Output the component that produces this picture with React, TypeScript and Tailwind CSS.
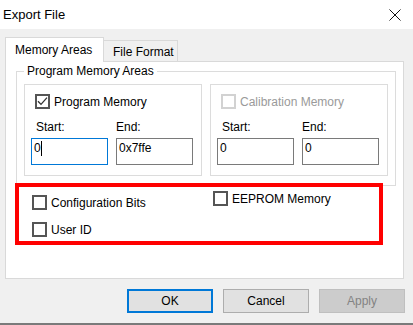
import type { ReactNode } from 'react';

function Check({ checked = false, disabled = false }: { checked?: boolean; disabled?: boolean }) {
  return (
    <span
      className={
        disabled
          ? 'flex h-[15px] w-[15px] shrink-0 items-center justify-center border-2 border-[#d2d2d2] bg-white'
          : 'flex h-[15px] w-[15px] shrink-0 items-center justify-center border-2 border-[#555555] bg-white'
      }
    >
      {checked && (
        <svg width="11" height="11" viewBox="0 0 11 11">
          <polyline points="1,5.2 4,8.4 10,1.6" fill="none" stroke="#333" strokeWidth="1.3" />
        </svg>
      )}
    </span>
  );
}

function CheckRow({ label, checked, disabled }: { label: string; checked?: boolean; disabled?: boolean }) {
  return (
    <div className="flex items-center gap-[4px]">
      <Check checked={checked} disabled={disabled} />
      <span className={disabled ? 'text-[#9a9a9a]' : ''}>{label}</span>
    </div>
  );
}

function Field({ value, focused = false }: { value: string; focused?: boolean }) {
  return (
    <div
      className={
        focused
          ? 'mt-[4px] flex h-[27px] items-start border border-[#0078d7] bg-white pl-[2px] pt-[2px]'
          : 'mt-[4px] flex h-[27px] items-start border border-[#7a7a7a] bg-white pl-[2px] pt-[2px]'
      }
    >
      <span>{value}</span>
      {focused && <span className="h-[15px] w-px bg-black" />}
    </div>
  );
}

function MemoryBox({
  title,
  checked,
  disabled,
  start,
  end,
  focused,
}: {
  title: string;
  checked?: boolean;
  disabled?: boolean;
  start: string;
  end: string;
  focused?: boolean;
}) {
  return (
    <div className="h-[92px] w-[178px] border border-[#dcdcdc] pt-[9px]">
      <div className="ml-[10px]">
        <CheckRow label={title} checked={checked} disabled={disabled} />
      </div>
      <div className="mt-[11px] flex gap-[8px] pl-[6px]">
        <div className="w-[77px]">
          <div className="pl-[5px]">Start:</div>
          <Field value={start} focused={focused} />
        </div>
        <div className="w-[77px]">
          <div>End:</div>
          <Field value={end} />
        </div>
      </div>
    </div>
  );
}

function Button({ children, variant = 'normal' }: { children: ReactNode; variant?: 'default' | 'normal' | 'disabled' }) {
  const cls =
    variant === 'default'
      ? 'flex h-[24px] w-[86px] items-center justify-center border-2 border-[#0078d7] bg-[#e1e1e1]'
      : variant === 'disabled'
        ? 'flex h-[24px] w-[86px] items-center justify-center border border-[#bfbfbf] bg-[#cccccc] text-[#838383]'
        : 'flex h-[24px] w-[86px] items-center justify-center border border-[#adadad] bg-[#e1e1e1]';
  return <div className={cls}>{children}</div>;
}

export default function App() {
  return (
    <div className="relative flex h-[325px] w-[413px] flex-col overflow-hidden border-b-2 border-[#7a7a7a] bg-[#f0f0f0] font-['Liberation_Sans',Arial,sans-serif] text-[12px] leading-[14px] text-black">
      {/* title bar */}
      <div className="flex h-[29px] shrink-0 items-center justify-between bg-white pl-[3px] pr-[12px]">
        <span className="text-[13px] leading-[15px]">Export File</span>
        <svg width="12" height="12" viewBox="0 0 12 12">
          <path d="M0.5 0.5L11.5 11.5M11.5 0.5L0.5 11.5" stroke="#111" strokeWidth="1" />
        </svg>
      </div>

      {/* tabs */}
      <div className="relative z-10 ml-[5px] mt-[8px] flex h-[24px] shrink-0 items-end">
        <div className="-mb-px flex h-[25px] w-[99px] items-center border-x border-t border-[#d9d9d9] bg-white pl-[9px]">
          Memory Areas
        </div>
        <div className="flex h-[21px] w-[74px] items-center border-r border-t border-[#d9d9d9] bg-[#f0f0f0] pl-[9px] pt-[1px]">
          File Format
        </div>
      </div>

      {/* tab panel */}
      <div className="ml-[5px] flex h-[218px] w-[399px] shrink-0 flex-col border border-[#d9d9d9] bg-white">
        <fieldset className="ml-[10px] mt-[2px] w-[380px] border border-[#dcdcdc]">
          <legend className="ml-[7px] px-[3px]">Program Memory Areas</legend>
          <div className="flex gap-[8px] px-[7px] pb-[9px] pt-[6px]">
            <MemoryBox title="Program Memory" checked start="0" end="0x7ffe" focused />
            <MemoryBox title="Calibration Memory" disabled start="0" end="0" />
          </div>
        </fieldset>

        <div className="ml-[26px] mt-[5px] flex items-start">
          <div className="flex w-[181px] flex-col gap-[12px] pt-[4px]">
            <CheckRow label="Configuration Bits" />
            <CheckRow label="User ID" />
          </div>
          <CheckRow label="EEPROM Memory" />
        </div>
      </div>

      {/* buttons */}
      <div className="mt-[10px] flex justify-end gap-[10px] pr-[8px]">
        <Button variant="default">OK</Button>
        <Button>Cancel</Button>
        <Button variant="disabled">Apply</Button>
      </div>

      {/* highlight annotation */}
      <div className="absolute left-[15px] top-[183px] h-[62px] w-[368px] border-4 border-[#ff0000]" />
    </div>
  );
}
